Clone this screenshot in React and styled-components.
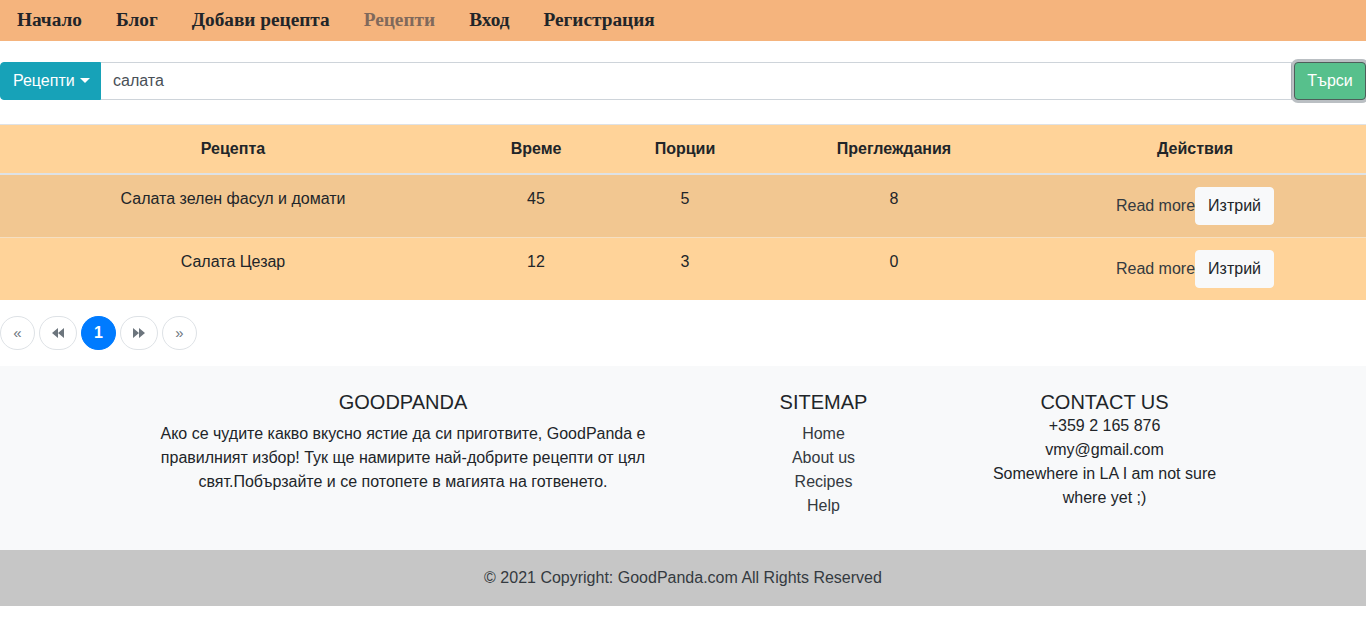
import React from "react";
import styled, { createGlobalStyle } from "styled-components";

const Global = createGlobalStyle`
  * { box-sizing: border-box; }
  body {
    margin: 0;
    font-family: "Liberation Sans", Arial, sans-serif;
    font-size: 16px;
    line-height: 1.5;
    color: #212529;
    background: #fff;
  }
`;

const Nav = styled.nav`
  height: 41px;
  background: #f5b47d;
  display: flex;
  align-items: center;
`;

const NavLink = styled.a`
  font-family: "Liberation Serif", "Times New Roman", serif;
  font-weight: 700;
  font-size: 19.3px;
  padding: 0 17px;
  color: ${(p) => (p.$active ? "#80695b" : "#212529")};
  text-decoration: none;
`;

const SearchRow = styled.form`
  display: flex;
  height: 38px;
  margin-top: 21px;
`;

const DropBtn = styled.button`
  background: #17a2b8;
  color: #fff;
  border: 1px solid #17a2b8;
  border-radius: 4px 0 0 4px;
  font-family: "Liberation Sans", Arial, sans-serif;
  font-size: 16px;
  padding: 0 12px;
  width: 101px;
  display: flex;
  align-items: center;
  gap: 5px;
`;

const Caret = styled.span`
  width: 0;
  height: 0;
  border-left: 5px solid transparent;
  border-right: 5px solid transparent;
  border-top: 5px solid #fff;
  margin-top: -1px;
`;

const Input = styled.input`
  flex: 1;
  border: 1px solid #ced4da;
  border-left: none;
  font-family: "Liberation Sans", Arial, sans-serif;
  font-size: 16px;
  color: #495057;
  padding: 0 12px;
  outline: none;
`;

const SearchBtn = styled.button`
  width: 72px;
  margin-left: 2px;
  background: #57c08c;
  color: #fff;
  border: 1px solid #4e5e5a;
  border-radius: 4px;
  box-shadow: 0 0 0 3px rgba(130, 138, 145, 0.55);
  font-family: "Liberation Sans", Arial, sans-serif;
  font-size: 16px;
  padding: 0;
`;

const Table = styled.table`
  width: 100%;
  border-collapse: collapse;
  margin-top: 24px;
  margin-bottom: 16px;
  text-align: center;
`;

const Th = styled.th`
  background: #ffd399;
  font-weight: 700;
  padding: 12px;
  border-top: 1px solid #dee2e6;
  border-bottom: 2px solid #dee2e6;
  width: ${(p) => p.$w}px;
`;

const Tr = styled.tr`
  background: ${(p) => (p.$alt ? "#f2c791" : "#ffd399")};
`;

const Td = styled.td`
  padding: 12px;
  vertical-align: top;
  border-top: 1px solid ${(p) => (p.$first ? "transparent" : "#f5dfc2")};
`;

const ActionCell = styled.div`
  display: flex;
  align-items: center;
  justify-content: center;
  height: 38px;
`;

const ReadMore = styled.a`
  color: #343a40;
  text-decoration: none;
`;

const DelBtn = styled.button`
  background: #f8f9fa;
  border: 1px solid #f8f9fa;
  border-radius: 4px;
  font-family: "Liberation Sans", Arial, sans-serif;
  font-size: 16px;
  color: #212529;
  height: 38px;
  width: 79px;
  padding: 0;
`;

const Pager = styled.ul`
  display: flex;
  gap: 4px;
  list-style: none;
  margin: 0 0 16px;
  padding: 0;
`;

const PageBtn = styled.li`
  height: 34px;
  width: ${(p) => p.$w}px;
  border-radius: 17px;
  border: 1px solid ${(p) => (p.$active ? "#007bff" : "#dee2e6")};
  background: ${(p) => (p.$active ? "#007bff" : "#fff")};
  color: ${(p) => (p.$active ? "#fff" : "#6c757d")};
  font-size: ${(p) => (p.$active ? "16px" : "15px")};
  font-weight: ${(p) => (p.$active ? 700 : 400)};
  display: flex;
  align-items: center;
  justify-content: center;
`;

const Footer = styled.footer`
  background: #f8f9fa;
  padding: 24px 0 32px;
`;

const Container = styled.div`
  max-width: 1140px;
  margin: 0 auto;
  display: grid;
  grid-template-columns: 2fr 1fr 1fr;
  text-align: center;
`;

const Col = styled.div`
  padding: 0 ${(p) => p.$pr}px 0 ${(p) => p.$pl}px;
`;

const FHead = styled.h5`
  font-size: 20px;
  font-weight: 400;
  line-height: 1.2;
  margin: 0 0 ${(p) => (p.$tight ? 0 : 8)}px;
`;

const FText = styled.p`
  margin: 0;
`;

const FList = styled.ul`
  list-style: none;
  margin: 0;
  padding: 0;
`;

const FLink = styled.a`
  color: #343a40;
  text-decoration: none;
`;

const Copy = styled.div`
  background: #c6c6c6;
  text-align: center;
  padding: 16px 0;
  color: #343a40;
`;

const Tri = ({ dir }) => (
  <svg width="12" height="10" viewBox="0 0 12 10">
    {dir === "l" ? (
      <path d="M6 0 L0 5 L6 10 Z M12 0 L6 5 L12 10 Z" fill="#6c757d" />
    ) : (
      <path d="M0 0 L6 5 L0 10 Z M6 0 L12 5 L6 10 Z" fill="#6c757d" />
    )}
  </svg>
);

const rows = [
  { name: "Салата зелен фасул и домати", t: 45, p: 5, v: 8 },
  { name: "Салата Цезар", t: 12, p: 3, v: 0 },
];

export default function App() {
  return (
    <>
      <Global />
      <Nav>
        <NavLink>Начало</NavLink>
        <NavLink>Блог</NavLink>
        <NavLink>Добави рецепта</NavLink>
        <NavLink $active>Рецепти</NavLink>
        <NavLink>Вход</NavLink>
        <NavLink>Регистрация</NavLink>
      </Nav>
      <SearchRow onSubmit={(e) => e.preventDefault()}>
        <DropBtn type="button">
          Рецепти <Caret />
        </DropBtn>
        <Input defaultValue="салата" />
        <SearchBtn>Търси</SearchBtn>
      </SearchRow>
      <Table>
        <thead>
          <tr>
            <Th $w={466}>Рецепта</Th>
            <Th $w={140}>Време</Th>
            <Th $w={158}>Порции</Th>
            <Th $w={260}>Преглеждания</Th>
            <Th>Действия</Th>
          </tr>
        </thead>
        <tbody>
          {rows.map((r, i) => (
            <Tr key={r.name} $alt={i === 0}>
              <Td $first={i === 0}>{r.name}</Td>
              <Td $first={i === 0}>{r.t}</Td>
              <Td $first={i === 0}>{r.p}</Td>
              <Td $first={i === 0}>{r.v}</Td>
              <Td $first={i === 0}>
                <ActionCell>
                  <ReadMore>Read more</ReadMore>
                  <DelBtn>Изтрий</DelBtn>
                </ActionCell>
              </Td>
            </Tr>
          ))}
        </tbody>
      </Table>
      <Pager>
        <PageBtn $w={35}>«</PageBtn>
        <PageBtn $w={38}><Tri dir="l" /></PageBtn>
        <PageBtn $w={35} $active>1</PageBtn>
        <PageBtn $w={38}><Tri dir="r" /></PageBtn>
        <PageBtn $w={35}>»</PageBtn>
      </Pager>
      <Footer>
        <Container>
          <Col $pl={35} $pr={25}>
            <FHead>GOODPANDA</FHead>
            <FText>
              Ако се чудите какво вкусно ястие да си приготвите, GoodPanda е
              правилният избор! Тук ще намирите най-добрите рецепти от цял
              свят.Побързайте и се потопете в магията на готвенето.
            </FText>
          </Col>
          <Col $pl={13} $pr={17}>
            <FHead>SITEMAP</FHead>
            <FList>
              <li><FLink>Home</FLink></li>
              <li><FLink>About us</FLink></li>
              <li><FLink>Recipes</FLink></li>
              <li><FLink>Help</FLink></li>
            </FList>
          </Col>
          <Col $pl={9} $pr={21}>
            <FHead $tight>CONTACT US</FHead>
            <FList>
              <li>+359 2 165 876</li>
              <li>vmy@gmail.com</li>
              <li>Somewhere in LA I am not sure where yet ;)</li>
            </FList>
          </Col>
        </Container>
      </Footer>
      <Copy>
        © 2021 Copyright: <FLink>GoodPanda.com</FLink> All Rights Reserved
      </Copy>
    </>
  );
}
